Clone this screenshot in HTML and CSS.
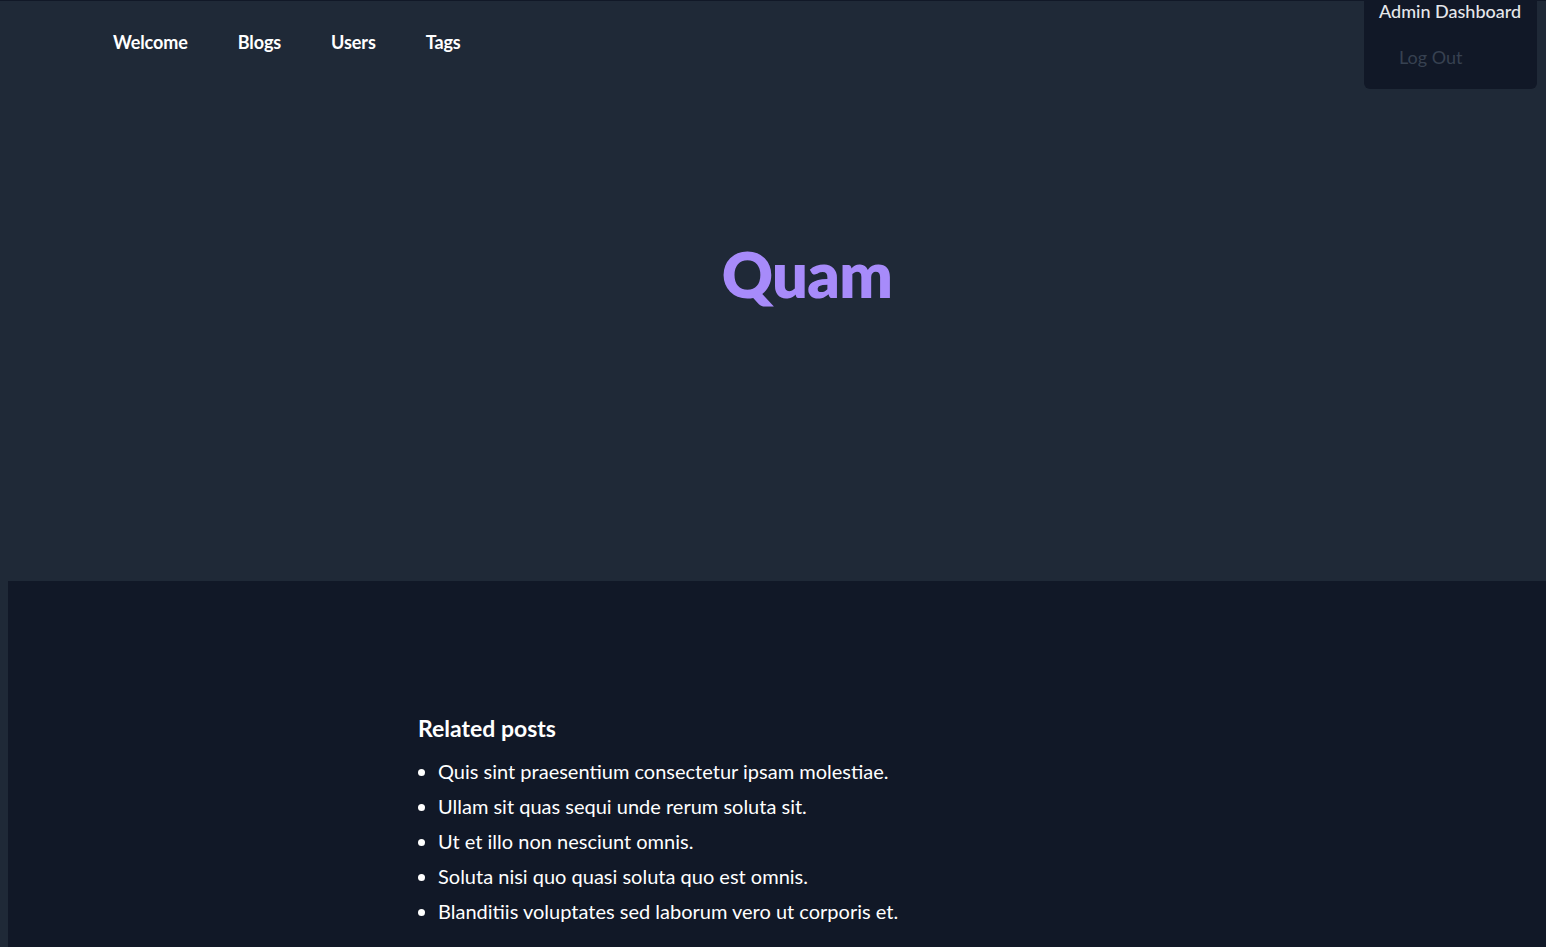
FILE: index.html
```html
<!DOCTYPE html>
<html lang="en">
<head>
<meta charset="utf-8">
<title>Quam</title>
<link rel="stylesheet" href="styles.css">
</head>
<body>
<div class="top">
  <header class="header">
    <nav class="nav">
      <a href="#" class="nav-link">Welcome</a>
      <a href="#" class="nav-link">Blogs</a>
      <a href="#" class="nav-link">Users</a>
      <a href="#" class="nav-link">Tags</a>
    </nav>
  </header>
  <div class="menu">
    <div class="menu-title">Admin Dashboard</div>
    <a href="#" class="menu-item">Log Out</a>
  </div>
  <section class="hero">
    <h1 class="title">Quam</h1>
  </section>
</div>
<main class="related">
  <div class="related-inner">
    <h2 class="related-title">Related posts</h2>
    <ul class="related-list">
      <li>Quis sint praesentium consectetur ipsam molestiae.</li>
      <li>Ullam sit quas sequi unde rerum soluta sit.</li>
      <li>Ut et illo non nesciunt omnis.</li>
      <li>Soluta nisi quo quasi soluta quo est omnis.</li>
      <li>Blanditiis voluptates sed laborum vero ut corporis et.</li>
    </ul>
  </div>
</main>
</body>
</html>
```

FILE: styles.css
```css
html, body {
  margin: 0;
  padding: 0;
}
body {
  background: #1f2937;
  font-family: "Lato", "Open Sans", sans-serif;
  color: #ffffff;
}
.top {
  position: relative;
  border-top: 1px solid #111827;
  height: 580px;
  display: flex;
  flex-direction: column;
}
.header {
  height: 84px;
  display: flex;
  align-items: center;
  padding-left: 113px;
}
.nav {
  display: flex;
  gap: 50px;
  transform: translateY(-1px);
}
.nav-link {
  color: #ffffff;
  text-decoration: none;
  font-size: 18px;
  font-weight: 700;
  letter-spacing: -0.1px;
}
.menu {
  position: absolute;
  top: -1px;
  right: 9px;
  width: 173px;
  height: 89px;
  background: #111827;
  border-radius: 0 0 6px 6px;
  box-sizing: border-box;
}
.menu-title {
  padding-left: 15px;
  font-size: 18px;
  line-height: 22px;
  color: #e5e7eb;
  font-weight: 500;
}
.menu-item {
  display: block;
  margin-top: 24px;
  padding-left: 35px;
  font-size: 18px;
  line-height: 22px;
  color: #374151;
  text-decoration: none;
}
.hero {
  flex: 1;
  display: flex;
  justify-content: center;
  padding-left: 68px;
}
.title {
  margin: 149px 0 0;
  font-size: 63px;
  line-height: 80px;
  font-weight: 800;
  color: #a78bfa;
  letter-spacing: -0.6px;
}
.related {
  margin-left: 8px;
  background: #111827;
  min-height: 367px;
  padding-top: 132px;
  box-sizing: border-box;
}
.related-inner {
  padding-left: 410px;
}
.related-title {
  margin: 0 0 11px;
  font-size: 23px;
  line-height: 30px;
  font-weight: 700;
}
.related-list {
  margin: 0;
  padding-left: 20px;
  font-size: 20px;
  line-height: 35px;
}
```
